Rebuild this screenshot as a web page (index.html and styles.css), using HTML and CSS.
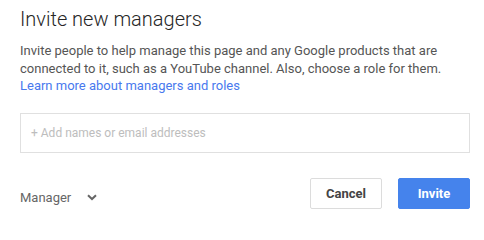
FILE: index.html
```html
<!DOCTYPE html>
<html>
<head>
<meta charset="utf-8">
<link rel="stylesheet" href="styles.css">
</head>
<body>
<div class="dialog">
  <h1 class="title">Invite new managers</h1>
  <p class="desc">Invite people to help manage this page and any Google products that are connected to it, such as a YouTube channel. Also, choose a role for them.<br><a class="link" href="#">Learn more about managers and roles</a></p>
  <div class="input"><span class="placeholder">+ Add names or email addresses</span></div>
  <div class="footer">
    <div class="role">Manager
      <svg class="chev" width="10" height="7" viewBox="0 0 10 7"><path d="M1 1.2 L5 5 L9 1.2" fill="none" stroke="#666" stroke-width="2"/></svg>
    </div>
    <div class="actions">
      <button class="btn cancel">Cancel</button>
      <button class="btn invite">Invite</button>
    </div>
  </div>
</div>
</body>
</html>
```
FILE: styles.css
```css
html, body { margin: 0; padding: 0; background: #fff; }
body { font-family: Roboto, "Noto Sans", sans-serif; }
.dialog { width: 450px; padding: 0 14px 0 20px; }
.title { margin: 0; padding-top: 5px; font-size: 20px; font-weight: 300; color: #262626; line-height: 28px; }
.desc { margin: 9px 0 0; font-size: 13px; line-height: 17.5px; color: #555; }
.link { color: #4879ee; text-decoration: none; }
.input { margin-top: 18px; height: 38px; border: 1px solid #e0e0e0; box-sizing: content-box; display: flex; align-items: center; padding-left: 10px; }
.placeholder { font-size: 12px; color: #bdbdbd; }
.footer { margin-top: 25px; display: flex; justify-content: space-between; align-items: center; }
.role { font-size: 13px; color: #666; display: flex; align-items: center; gap: 16px; padding-top: 8px; }
.chev { display: block; margin-top: 1px; }
.actions { display: flex; gap: 16px; }
.btn { width: 72px; height: 31px; border-radius: 2px; font-family: Roboto, sans-serif; font-size: 13px; font-weight: 700; padding: 0; }
.cancel { background: #fff; border: 1px solid #dcdcdc; color: #444; }
.invite { background: #4583ec; border: 1px solid #4583ec; color: #fff; }
```
